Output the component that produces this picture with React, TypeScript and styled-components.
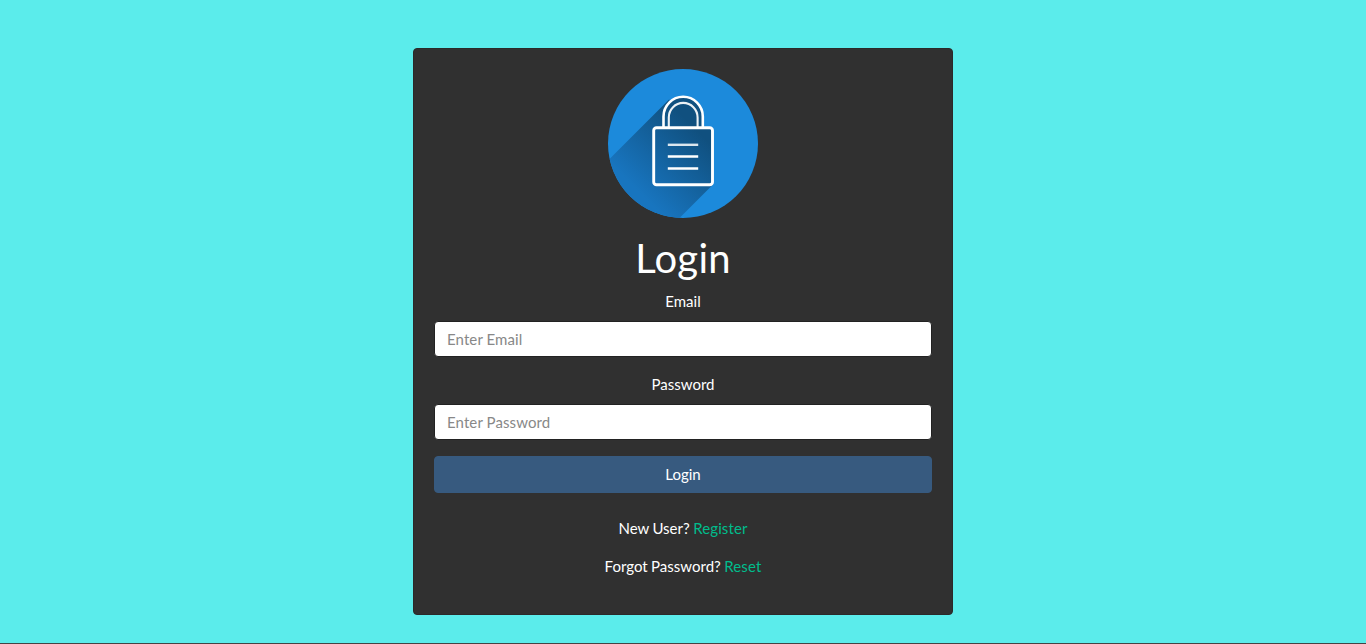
import React from "react";
import styled, { createGlobalStyle } from "styled-components";

const GlobalStyle = createGlobalStyle`
  *, *::before, *::after { box-sizing: border-box; }
  html { background: #444444; }
  body {
    margin: 0;
    font-family: Lato, "Liberation Sans", sans-serif;
    font-size: 15px;
    line-height: 1.5;
    color: #fff;
    overflow: hidden;
  }
`;

const Page = styled.main`
  display: flex;
  justify-content: center;
  align-items: flex-start;
  height: 643px;
  padding-top: 48px;
  background: #5beceb;
`;

const Card = styled.section`
  display: flex;
  flex-direction: column;
  width: 540px;
  height: 567px;
  padding: 20px;
  text-align: center;
  background: #303030;
  border: 1px solid #2a2a2a;
  border-radius: 4px;
`;

const Logo = styled.svg`
  display: block;
  width: 150px;
  height: 150px;
  margin: 0 auto 15px;
`;

const Title = styled.h1`
  margin: 0 0 8px;
  font-size: 40px;
  font-weight: 400;
  line-height: 48px;
  letter-spacing: 0.25px;
`;

const Field = styled.div`
  margin-bottom: 16px;
`;

const Label = styled.label`
  display: block;
  margin-bottom: 9px;
  line-height: 22px;
`;

const Input = styled.input`
  display: block;
  width: 100%;
  height: 36px;
  padding: 6px 12px;
  font: inherit;
  color: #444;
  background: #fff;
  border: 1px solid #222;
  border-radius: 4px;
  &::placeholder { color: #888; opacity: 1; letter-spacing: 0.1px; }
`;

const SubmitButton = styled.button`
  display: block;
  width: 100%;
  height: 37px;
  margin-bottom: 23.5px;
  padding: 5px 12px 7px;
  font: inherit;
  line-height: 22px;
  color: #fff;
  background: #375a7f;
  border: 1px solid #375a7f;
  border-radius: 4px;
`;

const Note = styled.p`
  margin: 0 0 16px;
  word-spacing: -0.4px;
`;

const Link = styled.a`
  color: #00bc8c;
  letter-spacing: 0.12px;
  text-decoration: none;
`;

const LockLogo = () => (
  <Logo viewBox="0 0 150 150" aria-hidden="true">
    <defs>
      <clipPath id="disc">
        <ellipse cx="75" cy="74.5" rx="75" ry="74.5" />
      </clipPath>
      <linearGradient id="shadow" gradientUnits="userSpaceOnUse" x1="88" y1="60" x2="28" y2="120">
        <stop offset="0" stopColor="#10507f" />
        <stop offset="1" stopColor="#1875bf" />
      </linearGradient>
    </defs>
    <ellipse cx="75" cy="74.5" rx="75" ry="74.5" fill="#1c8adb" />
    <path
      clipPath="url(#disc)"
      fill="url(#shadow)"
      d="M61.3 30.2 L-20 111.5 V190 H30.5 L105 115.5 V59 H94.8 V47.5 A19.6 19.7 0 0 0 61.3 33.5 Z"
    />
    <g fill="none" stroke="#fff">
      <path strokeWidth="2.6" d="M55.5 58 V47.5 A19.65 19.7 0 0 1 94.8 47.5 V58" />
      <path strokeWidth="2.1" strokeOpacity="0.92" d="M60.8 58 V48.5 A14.4 14.6 0 0 1 89.6 48.5 V58" />
      <rect x="45.7" y="58.8" width="58.8" height="57" rx="2.8" strokeWidth="2.9" />
      <path strokeWidth="2.4" strokeOpacity="0.85" d="M59.8 75.8 H90.2" />
      <path strokeWidth="2.3" d="M59.8 87.5 H90.2 M59.8 99.5 H90.2" />
    </g>
  </Logo>
);

export default function App() {
  return (
    <>
      <GlobalStyle />
      <Page>
        <Card>
          <LockLogo />
          <Title>Login</Title>
          <Field>
            <Label htmlFor="email">Email</Label>
            <Input id="email" type="email" placeholder="Enter Email" />
          </Field>
          <Field>
            <Label htmlFor="password">Password</Label>
            <Input id="password" type="password" placeholder="Enter Password" />
          </Field>
          <SubmitButton type="button">Login</SubmitButton>
          <Note>
            New User? <Link href="#">Register</Link>
          </Note>
          <Note>
            Forgot Password? <Link href="#">Reset</Link>
          </Note>
        </Card>
      </Page>
    </>
  );
}
